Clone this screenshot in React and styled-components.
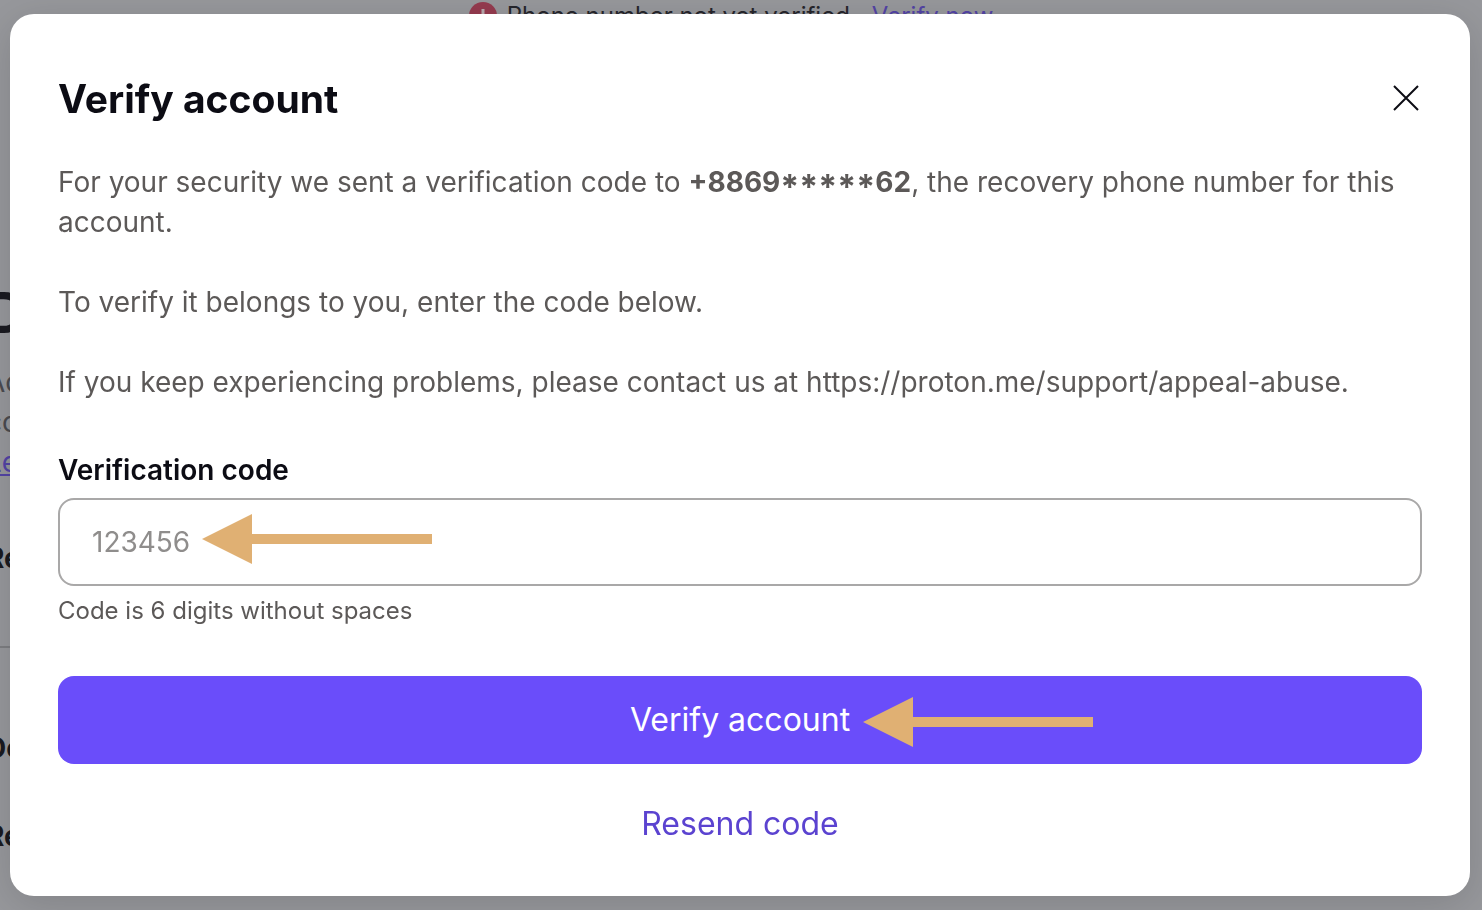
import React, { useState } from "react";
import styled, { createGlobalStyle } from "styled-components";

const GlobalStyle = createGlobalStyle`
  * {
    box-sizing: border-box;
  }
  body {
    margin: 0;
    background: #97989c;
    color: #0c0c14;
    font-family: Inter, "Liberation Sans", sans-serif;
    overflow: hidden;
  }
  h1, h2, h3, p {
    margin: 0;
  }
  button, input {
    font-family: inherit;
  }
`;

const Page = styled.div`
  height: 100vh;
  overflow: hidden;
`;

const TopBanner = styled.div`
  display: flex;
  align-items: center;
  justify-content: center;
  gap: 10px;
  height: 32px;
  padding-right: 20px;
  font-size: 24px;
  line-height: 32px;
  color: #26262c;

  a {
    margin-left: 12px;
    color: #5344a5;
  }
`;

const Settings = styled.main`
  margin-left: -14px;
  color: #1a1a20;
`;

const SettingsTitle = styled.h1`
  padding-top: 241px;
  font-size: 56px;
  font-weight: 700;
  line-height: 80px;
`;

const SettingsText = styled.p`
  padding: 9px 0 56px;
  font-size: 28px;
  line-height: 40px;
  color: #4b4b50;

  a {
    color: #5344a5;
  }
`;

const SettingsRow = styled.h3`
  height: ${({ $height }) => $height}px;
  font-size: 28px;
  font-weight: 700;
  line-height: 40px;
`;

const Divider = styled.hr`
  width: 50%;
  margin: 0 0 80px;
  border: 0;
  border-top: 2px solid #7d7e82;
`;

const Backdrop = styled.div`
  position: fixed;
  inset: 0;
  padding: 14px 12px 14px 10px;
`;

const Modal = styled.section`
  padding: 60px 48px 28px;
  border-radius: 24px;
  background: #fff;
  box-shadow: 0 8px 40px rgba(0, 0, 0, 0.14);
`;

const ModalHeader = styled.header`
  display: flex;
  align-items: center;
  justify-content: space-between;
  margin-bottom: 38px;
`;

const ModalTitle = styled.h2`
  font-size: 39px;
  font-weight: 700;
  line-height: 50px;
`;

const CloseButton = styled.button`
  display: flex;
  padding: 0 0 2px;
  border: 0;
  background: none;
  color: #0c0c14;
  cursor: pointer;
`;

const Message = styled.div`
  display: grid;
  gap: 40px;
  margin-bottom: 48px;
  font-size: 28px;
  line-height: 40px;
  color: #5c5958;
`;

const Mask = styled.span`
  font-size: 34px;
  line-height: 0;
  vertical-align: -7px;
`;

const Label = styled.label`
  display: block;
  margin-bottom: 8px;
  font-size: 28px;
  font-weight: 600;
  line-height: 40px;
`;

const Field = styled.div`
  position: relative;
`;

const CodeInput = styled.input`
  display: block;
  width: 100%;
  height: 88px;
  padding: 0 32px;
  border: 2px solid #a9a8a8;
  border-radius: 16px;
  background: #fff;
  font-size: 28px;
  color: #0c0c14;
  outline: none;

  &::placeholder {
    color: #8f8d8c;
    opacity: 1;
  }
`;

const Hint = styled.p`
  margin: 8px 0 48px;
  font-size: 24px;
  line-height: 34px;
  color: #5c5958;
`;

const Button = styled.button`
  position: relative;
  display: flex;
  align-items: center;
  justify-content: center;
  width: 100%;
  height: 88px;
  padding: 0 0 2px;
  border: 0;
  border-radius: 16px;
  background: ${({ $ghost }) => ($ghost ? "transparent" : "#6a4dfa")};
  color: ${({ $ghost }) => ($ghost ? "#5b43d0" : "#fff")};
  font-size: 32px;
  cursor: pointer;
`;

const Actions = styled.div`
  display: grid;
  gap: 16px;
`;

const Pointer = styled.svg`
  position: absolute;
  top: ${({ $top }) => $top}px;
  left: ${({ $left }) => $left};
  pointer-events: none;
`;

const Arrow = ({ top, left }) => (
  <Pointer $top={top} $left={left} width="230" height="50" viewBox="0 0 230 50" aria-hidden="true">
    <path d="M0 25 50 0v20h180v10H50v20z" fill="#e0b073" />
  </Pointer>
);

const AlertIcon = () => (
  <svg width="28" height="28" viewBox="0 0 28 28" aria-hidden="true">
    <circle cx="14" cy="14" r="14" fill="#953b4f" />
    <path d="M14 7v8M14 19v2" stroke="#b9a9ad" strokeWidth="3" />
  </svg>
);

const App = () => {
  const [code, setCode] = useState("");

  return (
    <>
      <GlobalStyle />
      <Page>
        <TopBanner>
          <AlertIcon />
          <span>Phone number not yet verified</span>
          <a href="#verify">Verify now</a>
        </TopBanner>
        <Settings>
          <SettingsTitle>D</SettingsTitle>
          <SettingsText>
            Ac
            <br />
            co
            <br />
            <a href="#learn">Le</a>
          </SettingsText>
          <SettingsRow $height={108}>Re</SettingsRow>
          <Divider />
          <SettingsRow $height={88}>De</SettingsRow>
          <SettingsRow $height={40}>Re</SettingsRow>
        </Settings>
      </Page>

      <Backdrop>
        <Modal role="dialog" aria-labelledby="modal-title">
          <ModalHeader>
            <ModalTitle id="modal-title">Verify account</ModalTitle>
            <CloseButton aria-label="Close">
              <svg width="32" height="32" viewBox="0 0 32 32" aria-hidden="true">
                <path d="M4 4l24 24M28 4 4 28" stroke="currentColor" strokeWidth="2" />
              </svg>
            </CloseButton>
          </ModalHeader>

          <Message>
            <p>
              For your security we sent a verification code to{" "}
              <strong>
                +8869<Mask>*****</Mask>62
              </strong>
              , the recovery phone number for this account.
            </p>
            <p>To verify it belongs to you, enter the code below.</p>
            <p>
              If you keep experiencing problems, please contact us at
              https://proton.me/support/appeal-abuse.
            </p>
          </Message>

          <Label htmlFor="code">Verification code</Label>
          <Field>
            <CodeInput
              id="code"
              placeholder="123456"
              value={code}
              onChange={(e) => setCode(e.target.value)}
            />
            <Arrow top={16} left="144px" />
          </Field>
          <Hint>Code is 6 digits without spaces</Hint>

          <Actions>
            <Button>
              Verify account
              <Arrow top={21} left="calc(50% + 123px)" />
            </Button>
            <Button $ghost>Resend code</Button>
          </Actions>
        </Modal>
      </Backdrop>
    </>
  );
};

export default App;
